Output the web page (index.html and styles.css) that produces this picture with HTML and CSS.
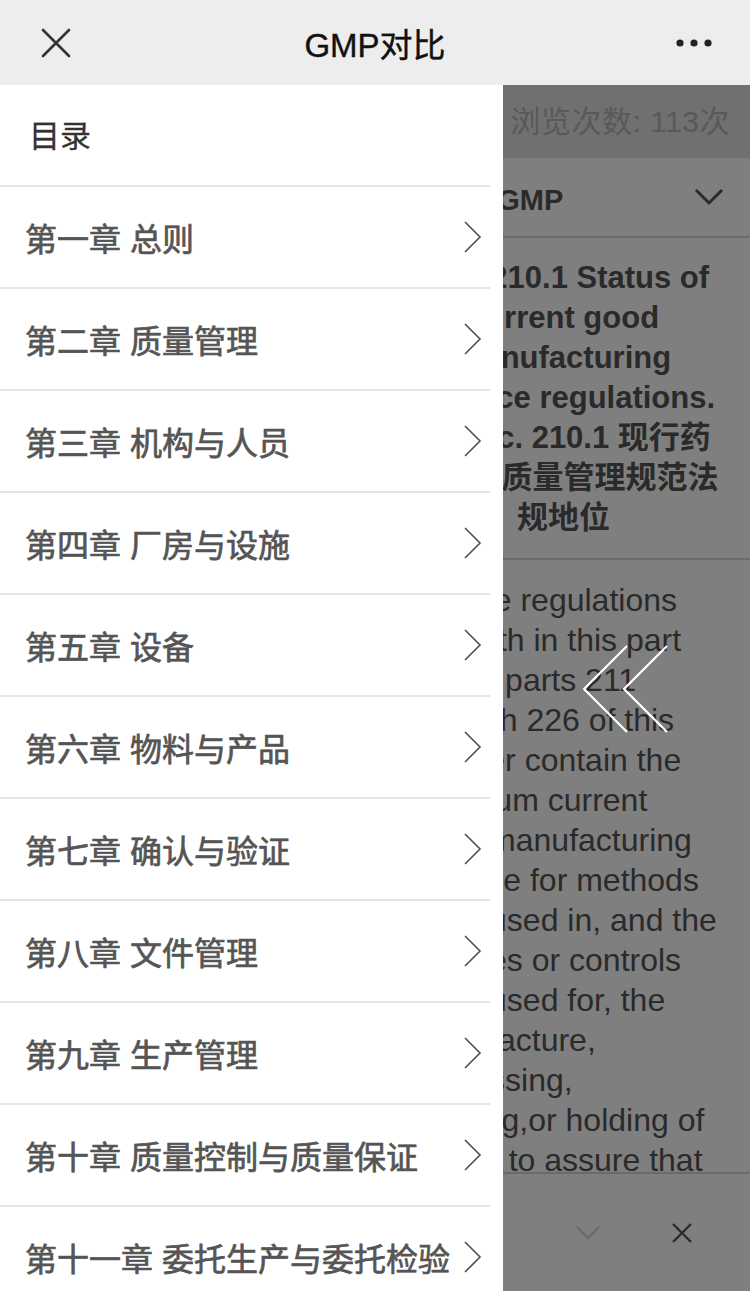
FILE: index.html
```html
<!DOCTYPE html>
<html lang="zh-CN">
<head>
  <meta charset="UTF-8" />
  <meta name="viewport" content="width=device-width, initial-scale=1.0" />
  <title>GMP对比</title>
  <link rel="stylesheet" href="styles.css">
</head>
<body>

  <header class="topbar">
    <button class="topbar-btn" aria-label="关闭">
      <svg width="30" height="30" viewBox="0 0 30 30"><path d="M2 2 L28 28 M28 2 L2 28" stroke="#333" stroke-width="2.6" stroke-linecap="round" fill="none"/></svg>
    </button>
    <h1 class="topbar-title">GMP对比</h1>
    <button class="topbar-btn" aria-label="更多">
      <svg width="36" height="10" viewBox="0 0 36 10"><circle cx="4" cy="5" r="3.6" fill="#222"/><circle cx="18" cy="5" r="3.6" fill="#222"/><circle cx="32" cy="5" r="3.6" fill="#222"/></svg>
    </button>
  </header>

  <div class="viewport">

    <!-- page under the drawer -->
    <div class="page">
      <div class="stats">浏览次数: 113次</div>

      <div class="compare">
        <section class="col">
          <div class="col-head">
            <span>中国 GMP</span>
            <svg width="30" height="18" viewBox="0 0 30 18"><path d="M2 2 L15 15 L28 2" stroke="#555" stroke-width="3" fill="none"/></svg>
          </div>
          <h2 class="clause-title">第一章 总则<br>第一条</h2>
          <p class="clause-body">为规范药品生产质量管理，根据《中华人民共和国药品管理法》、《中华人民共和国药品管理法实施条例》，制定本规范。</p>
        </section>

        <section class="col">
          <div class="col-head">
            <span>美国 cGMP</span>
            <svg width="30" height="18" viewBox="0 0 30 18"><path d="M2 2 L15 15 L28 2" stroke="#555" stroke-width="3" fill="none"/></svg>
          </div>
          <h2 class="clause-title">Sec. 210.1 Status of<br>current good<br>manufacturing<br>practice regulations.<br>§§ Sec. 210.1 现行药<br>品生产质量管理规范法<br>规地位</h2>
          <p class="clause-body">(a) The regulations<br>set forth in this part<br>and in parts 211<br>through 226 of this<br>chapter contain the<br>minimum current<br>good manufacturing<br>practice for methods<br>to be used in, and the<br>facilities or controls<br>to be used for, the<br>manufacture,<br>processing,<br>packing,or holding of<br>a drug to assure that<br>such drug meets the</p>
        </section>
      </div>

      <footer class="toolbar">
        <button class="toolbar-btn toolbar-btn-wide" aria-label="上一条">
          <svg width="24" height="14" viewBox="0 0 24 14"><path d="M1 13 L12 2 L23 13" stroke="#555" stroke-width="2" fill="none"/></svg>
        </button>
        <button class="toolbar-btn" aria-label="下一条">
          <svg width="24" height="14" viewBox="0 0 24 14"><path d="M1 1 L12 12 L23 1" stroke="#d6d6d6" stroke-width="2.4" fill="none"/></svg>
        </button>
        <button class="toolbar-btn" aria-label="关闭">
          <svg width="20" height="20" viewBox="0 0 20 20"><path d="M1 1 L19 19 M19 1 L1 19" stroke="#555" stroke-width="2.4" fill="none"/></svg>
        </button>
      </footer>
    </div>

    <div class="mask"></div>

    <!-- 目录 drawer -->
    <aside class="drawer">
      <div class="drawer-head">目录</div>
      <ul class="chapter-list">
        <li class="chapter">第一章 总则</li>
        <li class="chapter">第二章 质量管理</li>
        <li class="chapter">第三章 机构与人员</li>
        <li class="chapter">第四章 厂房与设施</li>
        <li class="chapter">第五章 设备</li>
        <li class="chapter">第六章 物料与产品</li>
        <li class="chapter">第七章 确认与验证</li>
        <li class="chapter">第八章 文件管理</li>
        <li class="chapter">第九章 生产管理</li>
        <li class="chapter">第十章 质量控制与质量保证</li>
        <li class="chapter">第十一章 委托生产与委托检验</li>
        <li class="chapter">第十二章 产品发运与召回</li>
      </ul>
    </aside>

    <svg class="swipe-hint" width="88" height="90" viewBox="0 0 88 90">
      <path d="M44 1 L1 44 L44 87" stroke="#fff" stroke-width="2.2" fill="none"/>
      <path d="M84 1 L41 44 L84 87" stroke="#fff" stroke-width="2.2" fill="none"/>
    </svg>
  </div>

</body>
</html>
```

FILE: styles.css
```css
html,
body {
  margin: 0;
  height: 100%;
}

body {
  display: flex;
  flex-direction: column;
  height: 100vh;
  overflow: hidden;
  font-family: "Liberation Sans", "Noto Sans CJK SC", sans-serif;
  background: #fff;
}

button {
  border: 0;
  padding: 0;
  background: none;
  font: inherit;
}

/* top bar */
.topbar {
  flex: none;
  height: 85px;
  display: flex;
  align-items: center;
  justify-content: space-between;
  padding: 0 28px;
  background: #ededed;
}

.topbar-btn {
  width: 56px;
  height: 56px;
  display: flex;
  align-items: center;
  justify-content: center;
}

.topbar-title {
  margin: 0;
  font-size: 33px;
  font-weight: 400;
  color: #111;
  -webkit-text-stroke: 0.4px #111;
}

.viewport {
  flex: 1;
  position: relative;
  overflow: hidden;
}

/* page under the drawer */
.page {
  height: 100%;
  display: flex;
  flex-direction: column;
}

.stats {
  flex: none;
  height: 73px;
  line-height: 73px;
  padding-right: 20px;
  text-align: right;
  font-size: 30px;
  letter-spacing: 0.5px;
  color: #b2b2b2;
  background: #e0e0e0;
}

.compare {
  flex: 1;
  min-height: 0;
  overflow: hidden;
  display: grid;
  grid-template-columns: 1fr 1fr;
}

.col + .col {
  border-left: 2px solid #d4d4d4;
}

.col-head {
  height: 78px;
  display: flex;
  align-items: center;
  justify-content: space-between;
  padding: 0 26px 0 38px;
  border-bottom: 2px solid #d4d4d4;
  font-size: 29px;
  font-weight: 700;
  color: #555;
}

.clause-title {
  margin: 0;
  padding: 20px 6px;
  border-bottom: 2px solid #d4d4d4;
  text-align: center;
  font-size: 31px;
  line-height: 40px;
  font-weight: 700;
  color: #555;
}

.clause-body {
  margin: 0;
  padding: 20px 20px 0 32px;
  font-size: 32px;
  line-height: 40px;
  color: #555;
}

.toolbar {
  flex: none;
  height: 117px;
  display: flex;
  justify-content: flex-end;
  padding-right: 21px;
  border-top: 2px solid #d4d4d4;
  background: #fff;
}

.toolbar-btn {
  width: 94px;
  display: flex;
  align-items: center;
  justify-content: center;
}

.toolbar-btn-wide {
  width: 120px;
}

/* drawer + mask */
.mask {
  position: absolute;
  inset: 0;
  background: rgba(0, 0, 0, 0.5);
}

.drawer {
  position: absolute;
  top: 0;
  left: 0;
  bottom: 0;
  width: 503px;
  overflow: hidden;
  background: #fff;
}

.drawer-head {
  height: 100px;
  line-height: 104px;
  margin-right: 13px;
  padding-left: 29px;
  border-bottom: 2px solid #e5e5e5;
  font-size: 31px;
  color: #333;
  -webkit-text-stroke: 0.3px #333;
}

.chapter-list {
  list-style: none;
  margin: 0 13px 0 0;
  padding: 0;
}

.chapter {
  height: 100px;
  display: flex;
  align-items: center;
  justify-content: space-between;
  padding: 0 8px 0 25px;
  border-bottom: 2px solid #e5e5e5;
  font-size: 32px;
  color: #555;
  -webkit-text-stroke: 0.7px #555;
  white-space: nowrap;
}

.chapter::after {
  content: "";
  flex: none;
  width: 18px;
  height: 32px;
  background: url("data:image/svg+xml,%3Csvg xmlns='http://www.w3.org/2000/svg' width='18' height='32' viewBox='0 0 18 32'%3E%3Cpath d='M1 1 L16 16 L1 31' stroke='%23555' stroke-width='1.7' fill='none'/%3E%3C/svg%3E") no-repeat center;
}

.swipe-hint {
  position: absolute;
  left: 583px;
  top: 560px;
}
```
